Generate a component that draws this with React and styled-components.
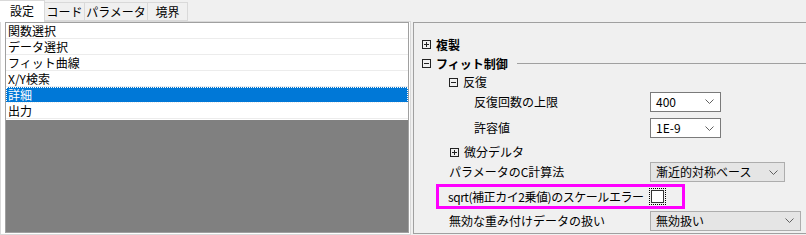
import React from 'react'
import styled, { createGlobalStyle } from 'styled-components'

const Global = createGlobalStyle`
  body {
    margin: 0;
    background: #f0f0f0;
    font-family: "Noto Sans CJK JP", "Noto Sans", sans-serif;
    font-size: 12px;
    color: #000;
    overflow: hidden;
  }
`

const Screen = styled.div`
  display: flex;
  width: 806px;
  height: 235px;
  overflow: hidden;
`

const LeftColumn = styled.div`
  display: flex;
  flex-direction: column;
  width: 411px;
  flex: none;
`

const TabBar = styled.div`
  display: flex;
  align-items: flex-end;
  height: 21px;
  position: relative;
  z-index: 1;
`

const Tab = styled.div`
  box-sizing: border-box;
  width: ${p => p.w}px;
  height: ${p => (p.active ? 22 : 19)}px;
  margin-bottom: ${p => (p.active ? -1 : 0)}px;
  margin-left: ${p => (p.active ? 0 : -1)}px;
  display: flex;
  align-items: center;
  justify-content: center;
  padding-bottom: ${p => (p.active ? 1 : 0)}px;
  background: ${p => (p.active ? '#fff' : '#f0f0f0')};
  border: 1px solid #d9d9d9;
  border-bottom: ${p => (p.active ? 'none' : '1px solid #d9d9d9')};
  border-left: ${p => (p.active ? 'none' : '1px solid #d9d9d9')};
  line-height: 1;
  white-space: nowrap;
`

const TabPage = styled.div`
  flex: 1;
  box-sizing: border-box;
  border: 1px solid #d9d9d9;
  background: #fff;
  padding: 0 1px 1px 4px;
  display: flex;
`

const ListBox = styled.div`
  flex: 1;
  display: flex;
  flex-direction: column;
  border: 1px solid #a0a0a0;
  background: #fff;
`

const ListRow = styled.div`
  box-sizing: border-box;
  height: 16px;
  display: flex;
  align-items: center;
  padding-left: 2px;
  border-bottom: 1px solid #ececec;
  line-height: 1;
  background: ${p => (p.selected ? '#0078d7' : '#fff')};
  color: ${p => (p.selected ? '#fff' : '#000')};
  outline: ${p => (p.selected ? '1px dotted #fff' : 'none')};
  outline-offset: -1px;
`

const EmptyArea = styled.div`
  flex: 1;
  margin-top: 1px;
  background: #808080;
`

const Panel = styled.div`
  box-sizing: border-box;
  width: 400px;
  flex: none;
  margin-left: 2px;
  margin-top: 22px;
  height: 212px;
  border: 1px solid #a0a0a0;
  padding-top: 12px;
  display: flex;
  flex-direction: column;
`

const Row = styled.div`
  display: grid;
  grid-template-columns: 236px auto;
  align-items: center;
  height: ${p => p.h}px;
  line-height: 1;
  white-space: nowrap;
`

const Label = styled.div`
  display: flex;
  align-items: center;
  gap: ${p => (p.tree ? 5 : 0)}px;
  padding-left: ${p => p.indent}px;
  font-weight: ${p => (p.bold ? 700 : 400)};
  letter-spacing: ${p => (p.tight ? '-0.45px' : 'normal')};
`

const GroupLabel = styled(Label)`
  grid-column: 1 / -1;
  &::after {
    content: '';
    flex: 1;
    height: 1px;
    margin-left: 4px;
    background: #a0a0a0;
  }
`

const Highlight = styled.div`
  box-sizing: border-box;
  margin-left: 22px;
  width: 249px;
  height: ${p => p.h}px;
  border: 3px solid #ff00ff;
  display: grid;
  grid-template-columns: 211px auto;
  align-items: center;
  line-height: 1;
  white-space: nowrap;
`

const Combo = styled.div`
  box-sizing: border-box;
  width: ${p => p.w}px;
  height: 20px;
  display: flex;
  align-items: center;
  justify-content: space-between;
  padding: 0 6px 0 5px;
  border: 1px solid ${p => (p.flat ? '#adadad' : '#7a7a7a')};
  background: ${p => (p.flat ? '#e5e5e5' : '#fff')};
`

const CheckBox = styled.div`
  box-sizing: border-box;
  width: 13px;
  height: 13px;
  margin-left: 1px;
  border: 1px solid #333;
  background: #fff;
  outline: 1px dotted #000;
  outline-offset: 1px;
`

const Chevron = () => (
  <svg width="9" height="5" viewBox="0 0 9 5">
    <polyline points="0.5,0.5 4.5,4.5 8.5,0.5" fill="none" stroke="#606060" strokeWidth="1" />
  </svg>
)

const Expander = ({ open }) => (
  <svg width="9" height="9" viewBox="0 0 9 9" style={{ flex: 'none' }}>
    <rect x="0.5" y="0.5" width="8" height="8" fill="none" stroke="#222" />
    <line x1="2" y1="4.5" x2="7" y2="4.5" stroke="#222" />
    {!open && <line x1="4.5" y1="2" x2="4.5" y2="7" stroke="#222" />}
  </svg>
)

const tabs = [
  { label: '設定', w: 45, active: true },
  { label: 'コード', w: 41 },
  { label: 'パラメータ', w: 64 },
  { label: '境界', w: 41 },
]

const items = ['関数選択', 'データ選択', 'フィット曲線', 'X/Y検索', '詳細', '出力']

export default function App() {
  return (
    <>
      <Global />
      <Screen>
        <LeftColumn>
          <TabBar>
            {tabs.map(t => (
              <Tab key={t.label} w={t.w} active={t.active}>{t.label}</Tab>
            ))}
          </TabBar>
          <TabPage>
            <ListBox>
              {items.map(i => (
                <ListRow key={i} selected={i === '詳細'}>{i}</ListRow>
              ))}
              <EmptyArea />
            </ListBox>
          </TabPage>
        </LeftColumn>

        <Panel>
          <Row h={19}>
            <Label tree indent={8} bold><Expander />複製</Label>
          </Row>
          <Row h={19}>
            <GroupLabel tree indent={8} bold><Expander open />フィット制御</GroupLabel>
          </Row>
          <Row h={18}>
            <Label tree indent={35}><Expander open />反復</Label>
          </Row>
          <Row h={21}>
            <Label indent={60}>反復回数の上限</Label>
            <Combo w={71}><span>400</span><Chevron /></Combo>
          </Row>
          <Row h={32}>
            <Label indent={60}>許容値</Label>
            <Combo w={71}><span>1E-9</span><Chevron /></Combo>
          </Row>
          <Row h={16}>
            <Label tree indent={36}><Expander />微分デルタ</Label>
          </Row>
          <Row h={24}>
            <Label indent={35}>パラメータのC計算法</Label>
            <Combo w={135} flat><span>漸近的対称ベース</span><Chevron /></Combo>
          </Row>
          <Highlight h={25}>
            <Label indent={9} tight>sqrt(補正カイ2乗値)のスケールエラー</Label>
            <CheckBox />
          </Highlight>
          <Row h={23}>
            <Label indent={35}>無効な重み付けデータの扱い</Label>
            <Combo w={151} flat><span>無効扱い</span><Chevron /></Combo>
          </Row>
        </Panel>
      </Screen>
    </>
  )
}
